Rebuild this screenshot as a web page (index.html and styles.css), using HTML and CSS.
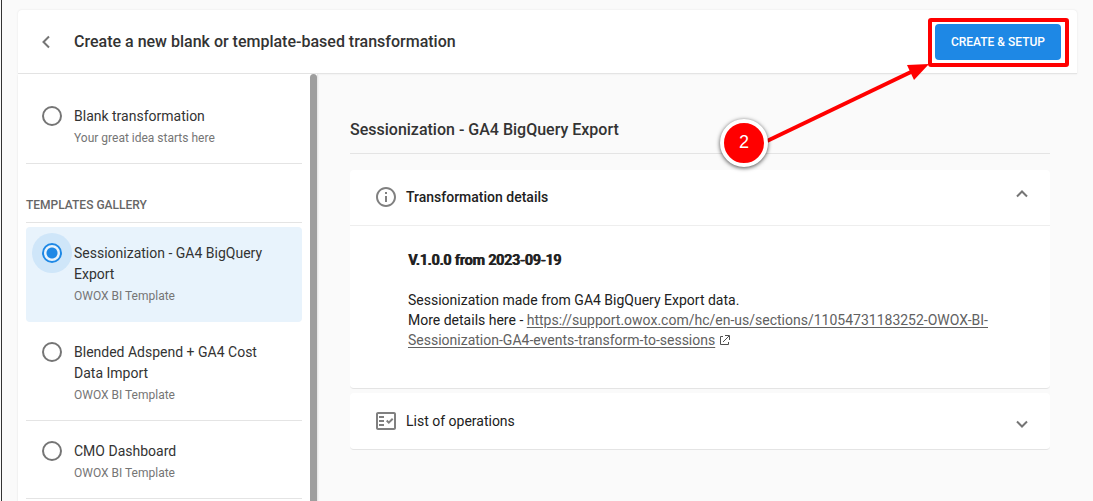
FILE: index.html
```html
<!DOCTYPE html>
<html lang="en">
<head>
    <meta charset="UTF-8">
    <meta name="viewport" content="width=device-width, initial-scale=1.0">
    <title>Create transformation</title>
    <link rel="stylesheet" href="styles.css">
</head>
<body>
    <div class="page">
        <header class="header">
            <button class="back" type="button" aria-label="Back">
                <svg width="24" height="24" viewBox="0 0 24 24"><path d="M15 6.500L9.500 12l5.500 5.500" fill="none"/></svg>
            </button>
            <h1>Create a new blank or template-based transformation</h1>
            <div class="create">
                <button class="create-button" type="button">CREATE &amp; SETUP</button>
                <svg class="callout" width="350" height="150" viewBox="0 0 350 150" aria-hidden="true">
                    <rect x="211" y="2" width="137" height="45" rx="1" fill="none" stroke="#f00" stroke-width="4"/>
                    <path d="M48 123L194 53" stroke="#f00" stroke-width="4"/>
                    <path d="M210 46L188 47L195 62z" fill="#f00"/>
                </svg>
                <span class="step">2</span>
            </div>
        </header>

        <div class="main">
            <aside class="sidebar">
                <form class="list">
                    <label class="item">
                        <input type="radio" name="template">
                        <span class="item-text">
                            <span class="item-title">Blank transformation</span>
                            <span class="item-sub">Your great idea starts here</span>
                        </span>
                    </label>
                    <h2 class="gallery">TEMPLATES GALLERY</h2>
                    <label class="item selected">
                        <input type="radio" name="template" checked>
                        <span class="item-text">
                            <span class="item-title">Sessionization - GA4 BigQuery Export</span>
                            <span class="item-sub">OWOX BI Template</span>
                        </span>
                    </label>
                    <label class="item">
                        <input type="radio" name="template">
                        <span class="item-text">
                            <span class="item-title">Blended Adspend + GA4 Cost Data Import</span>
                            <span class="item-sub">OWOX BI Template</span>
                        </span>
                    </label>
                    <label class="item">
                        <input type="radio" name="template">
                        <span class="item-text">
                            <span class="item-title">CMO Dashboard</span>
                            <span class="item-sub">OWOX BI Template</span>
                        </span>
                    </label>
                </form>
                <div class="scrollbar"></div>
            </aside>

            <main class="content">
                <h2 class="content-title">Sessionization - GA4 BigQuery Export</h2>

                <details class="card" open>
                    <summary>
                        <svg class="card-icon" width="24" height="24" viewBox="0 0 24 24"><path d="M11 7h2v2h-2zm0 4h2v6h-2zm1-9C6.480 2 2 6.480 2 12s4.480 10 10 10 10-4.480 10-10S17.520 2 12 2zm0 18c-4.410 0-8-3.590-8-8s3.590-8 8-8 8 3.590 8 8-3.590 8-8 8z"/></svg>
                        <span class="card-title">Transformation details</span>
                        <svg class="chevron" width="16" height="16" viewBox="0 0 16 16"><path d="M3 8.500l5 5 5-5" fill="none"/></svg>
                    </summary>
                    <div class="card-body">
                        <p class="version">V.1.0.0 from 2023-09-19</p>
                        <p>Sessionization made from GA4 BigQuery Export data.<br>
                        More details here - <a href="https://support.owox.com/hc/en-us/sections/11054731183252-OWOX-BI-Sessionization-GA4-events-transform-to-sessions">https://support.owox.com/hc/en-us/sections/11054731183252-OWOX-BI-Sessionization-GA4-events-transform-to-sessions</a>
                        <svg class="external" width="11" height="11" viewBox="0 0 11 11"><path d="M4 1.500H1.500v8h8V7M6 .5h4.500V5M10 1L4 7" fill="none"/></svg></p>
                    </div>
                </details>

                <details class="card">
                    <summary>
                        <svg class="card-icon" width="24" height="24" viewBox="0 0 24 24">
                            <path fill-rule="evenodd" d="M20 3H4c-1.100 0-2 .9-2 2v14c0 1.100.9 2 2 2h16c1.100 0 2-.9 2-2V5c0-1.100-.9-2-2-2zm0 16H4V5h16v14z"/>
                            <path d="M19.400 10.400L18 9l-3.200 3.200-1.400-1.400-1.400 1.400 2.800 2.800zM5 7h5v2H5zM5 11h5v2H5zM5 15h5v2H5z"/>
                        </svg>
                        <span class="card-title">List of operations</span>
                        <svg class="chevron" width="16" height="16" viewBox="0 0 16 16"><path d="M3 8.500l5 5 5-5" fill="none"/></svg>
                    </summary>
                </details>
            </main>
        </div>
    </div>
</body>
</html>
```
FILE: styles.css
```css
* {
    box-sizing: border-box;
}

body {
    margin: 0;
    background-color: #fafafa;
    color: #212121;
    font-family: Roboto, sans-serif;
    font-size: 14px;
    line-height: 20px;
}

h1, h2, p {
    margin: 0;
}

button {
    font-family: inherit;
    border: none;
    cursor: pointer;
}

.page {
    display: flex;
    flex-direction: column;
    height: 100vh;
    margin-left: 1px;
    padding: 10px 16px 0;
    border-left: 1px solid #333;
    overflow: hidden;
}

.header {
    display: flex;
    align-items: center;
    flex-shrink: 0;
    height: 64px;
    padding: 0 16px;
    background-color: #fff;
    border-bottom: 1px solid #e4e4e4;
    border-radius: 4px 4px 0 0;
    box-shadow: 0 0 2px rgba(0, 0, 0, 0.1);
}

.back {
    display: flex;
    margin-right: 16px;
    padding: 0;
    background: none;
    stroke: #757575;
    stroke-width: 2;
}

h1 {
    flex: 1;
    color: #333;
    font-size: 16px;
    font-weight: 500;
}

.create {
    position: relative;
}

.create-button {
    display: block;
    height: 36px;
    padding: 0 16px;
    background-color: #1e88e5;
    border-radius: 4px;
    color: #fff;
    font-size: 12px;
    font-weight: 500;
}

/* red frame, arrow and step number over the page */
.callout {
    position: absolute;
    top: -6px;
    right: -8px;
    z-index: 1;
    pointer-events: none;
}

.step {
    position: absolute;
    top: 95px;
    right: 293px;
    z-index: 2;
    width: 48px;
    height: 48px;
    background-color: #f00;
    border: 4px solid #fff;
    border-radius: 50%;
    box-shadow: 0 1px 4px rgba(0, 0, 0, 0.7);
    color: #fff;
    font-family: "Liberation Sans", Arial, sans-serif;
    font-size: 18px;
    line-height: 38px;
    text-align: center;
}

.main {
    display: flex;
    flex: 1;
    min-height: 0;
}

.sidebar {
    display: flex;
    flex-shrink: 0;
    width: 300px;
    background-color: #fff;
    border-right: 1px solid #e8e8e8;
    box-shadow: 0 1px 2px rgba(0, 0, 0, 0.1);
}

.list {
    flex: 1;
    padding: 12px 8px 0;
    overflow: hidden;
}

.scrollbar {
    width: 7px;
    background-color: #9e9e9e;
    border-radius: 4px 4px 0 0;
}

.item {
    display: flex;
    gap: 12px;
    padding: 20px 16px 14px;
    border-bottom: 1px solid #e4e4e4;
    cursor: pointer;
}

.item.selected {
    margin-top: 4px;
    padding-top: 16px;
    background-color: #e8f3fc;
    border-color: transparent;
    border-radius: 4px;
}

.item input {
    appearance: none;
    flex-shrink: 0;
    width: 20px;
    height: 20px;
    margin: 0;
    border: 2px solid #757575;
    border-radius: 50%;
}

.item input:checked {
    border-color: #1e88e5;
    background: radial-gradient(circle, #1e88e5 5px, transparent 6px);
    box-shadow: 0 0 0 10px rgba(30, 136, 229, 0.12);
}

.item-title {
    display: block;
    color: #333;
    line-height: 21px;
}

.item-sub {
    display: block;
    color: #757575;
    font-size: 12px;
    line-height: 22px;
}

.gallery {
    padding: 33px 0 9px;
    border-bottom: 1px solid #e4e4e4;
    color: #666;
    font-size: 12px;
    font-weight: 500;
    line-height: 16px;
}

.content {
    flex: 1;
    min-width: 0;
    padding: 44px 27px 0 32px;
}

.content-title {
    margin-bottom: 16px;
    padding-bottom: 12px;
    border-bottom: 1px solid #e4e4e4;
    color: #333;
    font-size: 16px;
    font-weight: 500;
    line-height: 23px;
}

.card {
    margin-bottom: 4px;
    background-color: #fff;
    border-bottom: 1px solid #e4e4e4;
    border-radius: 4px;
}

.card summary {
    display: flex;
    align-items: center;
    height: 56px;
    padding: 0 20px 0 24px;
    list-style: none;
    cursor: pointer;
}

.card[open] summary {
    padding-bottom: 1px;
    border-bottom: 1px solid #eee;
    font-weight: 500;
}

.card-icon {
    margin-right: 8px;
    fill: #808080;
}

.card-title {
    flex: 1;
}

.chevron {
    stroke: #757575;
    stroke-width: 2;
}

.card[open] .chevron {
    transform: rotate(180deg);
}

.card-body {
    padding: 24px 58px 38px;
}

.version {
    margin-bottom: 20px;
    font-weight: 500;
    text-shadow: 1px 0 0 #212121;
}

.card-body a {
    color: #616161;
    text-underline-offset: 2px;
}

.external {
    stroke: #505050;
    vertical-align: -1px;
}
```
